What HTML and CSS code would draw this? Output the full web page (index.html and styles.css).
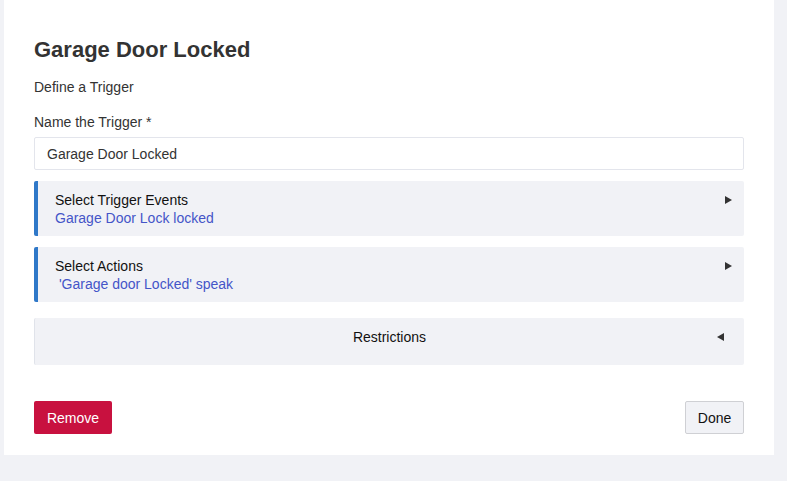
FILE: index.html
```html
<!DOCTYPE html>
<html>
<head>
<meta charset="utf-8">
<link rel="stylesheet" href="styles.css">
</head>
<body>
<div class="card">
  <h1 class="title">Garage Door Locked</h1>
  <p class="subtitle">Define a Trigger</p>
  <label class="label">Name the Trigger *</label>
  <div class="input">Garage Door Locked</div>
  <div class="panel accent">
    <div class="panel-text">
      <div class="panel-title">Select Trigger Events</div>
      <div class="panel-sub">Garage Door Lock locked</div>
    </div>
    <span class="tri-right"></span>
  </div>
  <div class="panel accent">
    <div class="panel-text">
      <div class="panel-title">Select Actions</div>
      <div class="panel-sub"> 'Garage door Locked' speak</div>
    </div>
    <span class="tri-right"></span>
  </div>
  <div class="panel restrict">
    <div class="restrict-label">Restrictions</div>
    <span class="tri-left"></span>
  </div>
  <div class="actions">
    <button class="btn btn-remove">Remove</button>
    <button class="btn btn-done">Done</button>
  </div>
</div>
</body>
</html>
```
FILE: styles.css
```css
html, body {
  margin: 0;
  padding: 0;
}
body {
  background: #f1f2f6;
  font-family: "Liberation Sans", Arial, sans-serif;
  font-size: 14px;
  color: #333;
}
.card {
  margin-left: 4px;
  width: 770px;
  height: 455px;
  box-sizing: border-box;
  background: #fff;
  padding: 37px 30px 0 30px;
}
.title {
  margin: 0;
  font-size: 22px;
  line-height: 26px;
  font-weight: bold;
  color: #333;
}
.subtitle {
  margin: 14px 0 0 0;
  line-height: 20px;
}
.label {
  display: block;
  margin-top: 15px;
  line-height: 20px;
}
.input {
  margin-top: 5px;
  height: 33px;
  box-sizing: border-box;
  border: 1px solid #e3e5ec;
  border-radius: 2px;
  padding: 0 12px;
  display: flex;
  align-items: center;
  color: #333;
}
.panel {
  background: #f1f2f6;
  border-radius: 2px;
  display: flex;
  align-items: flex-start;
  position: relative;
}
.accent {
  margin-top: 11px;
  border-left: 4px solid #2f78c8;
  padding: 10px 12px 9px 17px;
  height: 55px;
  box-sizing: border-box;
}
.accent + .accent {
  margin-top: 11px;
}
.panel-text {
  flex: 1;
}
.panel-title {
  line-height: 18px;
  color: #111;
}
.panel-sub {
  line-height: 18px;
  color: #4455c8;
  white-space: pre;
}
.tri-right {
  width: 0;
  height: 0;
  border-top: 4px solid transparent;
  border-bottom: 4px solid transparent;
  border-left: 7px solid #333;
  margin-top: 5px;
}
.restrict {
  margin-top: 16px;
  height: 47px;
  box-sizing: border-box;
  border-left: 1px solid #e0e3ea;
  align-items: center;
  justify-content: center;
}
.restrict-label {
  color: #111;
  line-height: 18px;
  margin-top: -9px;
}
.tri-left {
  position: absolute;
  right: 20px;
  top: 15px;
  width: 0;
  height: 0;
  border-top: 4px solid transparent;
  border-bottom: 4px solid transparent;
  border-right: 7px solid #333;
}
.actions {
  margin-top: 36px;
  display: flex;
  justify-content: space-between;
}
.btn {
  font-family: "Liberation Sans", Arial, sans-serif;
  font-size: 14px;
  height: 33px;
  border-radius: 2px;
  padding: 0;
  cursor: pointer;
}
.btn-remove {
  width: 78px;
  background: #c8113f;
  color: #fff;
  border: none;
}
.btn-done {
  width: 59px;
  background: #f1f2f6;
  color: #111;
  border: 1px solid #cfd0d4;
}
```
